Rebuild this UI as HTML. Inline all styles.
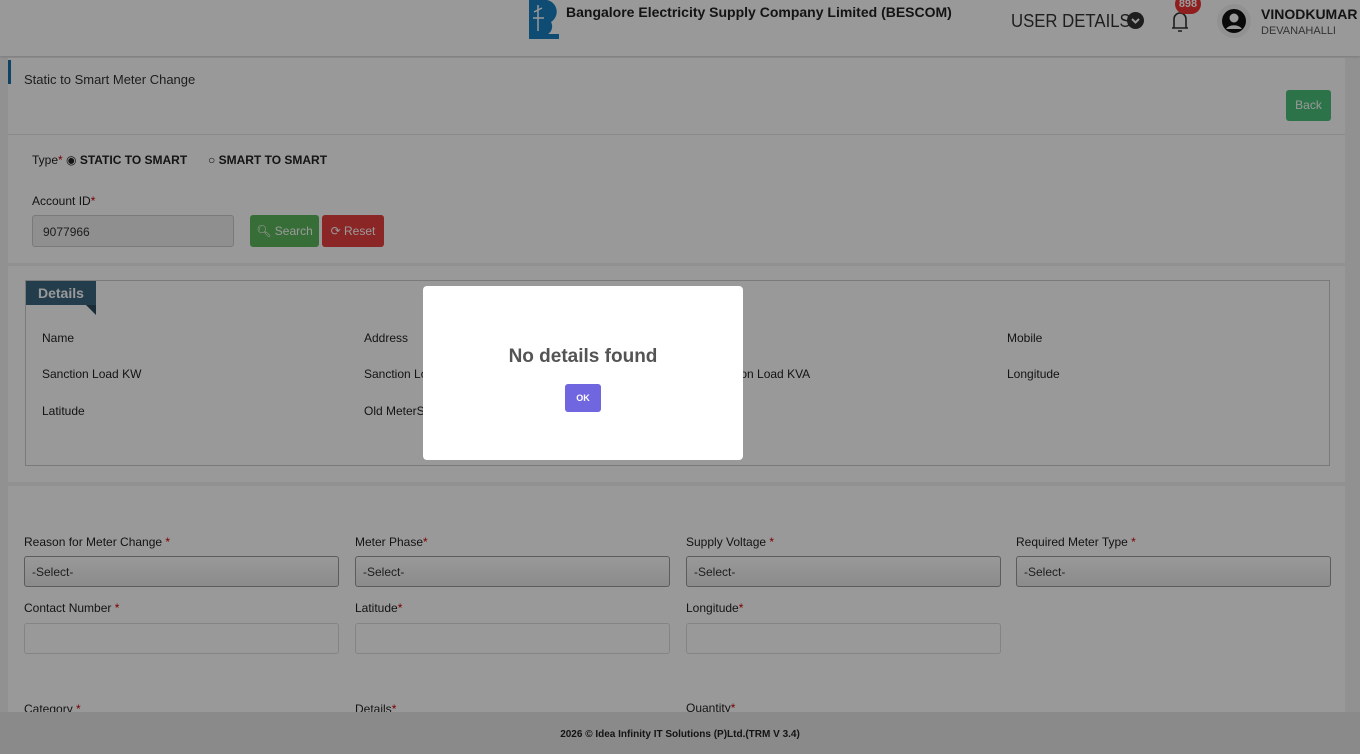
<!DOCTYPE html>
<html><head><meta charset="utf-8"><style>
*{box-sizing:border-box;margin:0;padding:0}
html,body{width:1360px;height:754px;overflow:hidden}
body{background:#f2f2f2;font-family:"Liberation Sans",sans-serif;font-size:12px;color:#222;position:relative}
.a{position:absolute}
.card{position:absolute;background:#fff;left:8px;width:1337px}
.lbl{position:absolute;font-size:12px;color:#222}
.st{color:#c00}
.sel{position:absolute;height:31px;width:315px;border:1px solid #999;border-radius:3px;background:linear-gradient(#fff,#e8e8e8);padding:8px 7px;font-size:12px;color:#333}
.inp{position:absolute;height:31px;width:315px;border:1px solid #ddd;border-radius:3px;background:#fff}
</style></head><body>
<div class="a" style="left:0;top:0;width:1360px;height:56px;background:#fff;box-shadow:0 1px 2px #ccc"></div>
<div class="a" style="left:528px;top:0;width:34px;height:40px">
<svg width="34" height="40"><path d="M1 0h18a12 12 0 0 1 4 22a9 9 0 0 1 -3 12h-19z" fill="#1a7fc0"/><path d="M10 5v26M6 12l8 -4M5 18h11" stroke="#fff" stroke-width="1.5"/><rect x="1" y="34" width="30" height="5" fill="#1a7fc0"/></svg></div>
<div class="a" style="left:566px;top:4px;font-size:14px;font-weight:bold;color:#222">Bangalore Electricity Supply Company Limited (BESCOM)</div>
<div class="a" style="left:1011px;top:11px;font-size:18px;color:#333;transform:scaleX(0.93);transform-origin:left">USER DETAILS</div>
<div class="a" style="left:1127px;top:12px;width:17px;height:17px;border-radius:50%;background:#333"></div>
<svg class="a" style="left:1127px;top:12px" width="17" height="17"><path d="M5 7l3.5 3.5L12 7" fill="none" stroke="#fff" stroke-width="2"/></svg>
<svg class="a" style="left:1168px;top:8px" width="24" height="26"><path d="M6 20V11a6 6 0 0 1 12 0v9h2M4 20h16M10 23h4" fill="none" stroke="#333" stroke-width="1.6"/></svg>
<div class="a" style="left:1175px;top:-6px;width:26px;height:20px;border-radius:10px;background:#e33;color:#fff;font-size:11px;font-weight:bold;text-align:center;line-height:20px">898</div>
<div class="a" style="left:1217px;top:4px;width:34px;height:34px;border-radius:50%;background:#f2f2f2"></div>
<svg class="a" style="left:1221px;top:8px" width="26" height="26"><circle cx="13" cy="13" r="12" fill="#111"/><circle cx="13" cy="10" r="4.5" fill="#fff"/><path d="M5 21a9 7 0 0 1 16 0" fill="#fff"/></svg>
<div class="a" style="left:1261px;top:6px;font-size:14px;font-weight:bold;color:#222">VINODKUMAR</div>
<div class="a" style="left:1261px;top:25px;font-size:11px;color:#555">DEVANAHALLI</div>

<div class="card" style="top:58px;height:205px"></div>
<div class="a" style="left:8px;top:60px;width:3px;height:24px;background:#1a6fa8"></div>
<div class="a" style="left:8px;top:134px;width:1337px;height:1px;background:#e6e6e6"></div>
<div class="a" style="left:24px;top:72px;font-size:13px;color:#333">Static to Smart Meter Change</div>
<div class="a" style="left:1286px;top:90px;width:45px;height:31px;background:#4cc07a;border-radius:3px;color:#fff;text-align:center;line-height:31px">Back</div>
<div class="lbl" style="left:32px;top:153px">Type<span class="st">*</span> ◉ <b>STATIC TO SMART</b></div>
<div class="lbl" style="left:208px;top:153px">○ <b>SMART TO SMART</b></div>
<div class="lbl" style="left:32px;top:194px">Account ID<span class="st">*</span></div>
<div class="a" style="left:32px;top:215px;width:202px;height:32px;border:1px solid #ccc;border-radius:3px;background:#eee;padding:9px 10px;color:#333">9077966</div>
<div class="a" style="left:250px;top:215px;width:69px;height:32px;background:#5cb85c;border-radius:3px;color:#fff;line-height:32px;text-align:center">🔍︎ Search</div>
<div class="a" style="left:322px;top:215px;width:62px;height:32px;background:#e84040;border-radius:3px;color:#fff;line-height:32px;text-align:center">⟳ Reset</div>

<div class="card" style="top:266px;height:216px"></div>
<div class="a" style="left:25px;top:280px;width:1305px;height:186px;border:1px solid #ccc"></div>
<div class="a" style="left:26px;top:281px;width:70px;height:24px;background:#3d6680;color:#fff;font-size:14px;font-weight:bold;padding:4px 12px">Details</div>
<div class="a" style="left:86px;top:305px;width:0;height:0;border-top:10px solid #2a4a5e;border-left:10px solid transparent"></div>
<div class="lbl" style="left:42px;top:331px">Name</div><div class="lbl" style="left:364px;top:331px">Address</div><div class="lbl" style="left:1007px;top:331px">Mobile</div>
<div class="lbl" style="left:42px;top:367px">Sanction Load KW</div><div class="lbl" style="left:364px;top:367px">Sanction Load HP</div><div class="lbl" style="left:707px;top:367px">Sanction Load KVA</div><div class="lbl" style="left:1007px;top:367px">Longitude</div>
<div class="lbl" style="left:42px;top:404px">Latitude</div><div class="lbl" style="left:364px;top:404px">Old MeterSerial</div>

<div class="card" style="top:486px;height:240px"></div>
<div class="lbl" style="left:24px;top:535px">Reason for Meter Change <span class="st">*</span></div>
<div class="lbl" style="left:355px;top:535px">Meter Phase<span class="st">*</span></div>
<div class="lbl" style="left:686px;top:535px">Supply Voltage <span class="st">*</span></div>
<div class="lbl" style="left:1016px;top:535px">Required Meter Type <span class="st">*</span></div>
<div class="sel" style="left:24px;top:556px">-Select-</div><div class="sel" style="left:355px;top:556px">-Select-</div><div class="sel" style="left:686px;top:556px">-Select-</div><div class="sel" style="left:1016px;top:556px">-Select-</div>
<div class="lbl" style="left:24px;top:601px">Contact Number <span class="st">*</span></div>
<div class="lbl" style="left:355px;top:601px">Latitude<span class="st">*</span></div>
<div class="lbl" style="left:686px;top:601px">Longitude<span class="st">*</span></div>
<div class="inp" style="left:24px;top:623px"></div><div class="inp" style="left:355px;top:623px"></div><div class="inp" style="left:686px;top:623px"></div>
<div class="lbl" style="left:24px;top:702px">Category <span class="st">*</span></div>
<div class="lbl" style="left:355px;top:702px">Details<span class="st">*</span></div>
<div class="lbl" style="left:686px;top:701px">Quantity<span class="st">*</span></div>
<div class="a" style="left:0;top:712px;width:1360px;height:42px;background:#e6e6e6;text-align:center;line-height:46px;font-size:10px;font-weight:bold;color:#222">2026 © Idea Infinity IT Solutions (P)Ltd.(TRM V 3.4)</div>

<div class="a" style="left:0;top:0;width:1360px;height:754px;background:rgba(0,0,0,0.4)"></div>
<div class="a" style="left:423px;top:286px;width:320px;height:174px;background:#fff;border-radius:4px"></div>
<div class="a" style="left:423px;top:346px;width:320px;text-align:center;font-size:19px;font-weight:bold;color:#545454">No details found</div>
<div class="a" style="left:565px;top:384px;width:36px;height:28px;background:#7066e0;border-radius:3px;color:#fff;font-size:9px;font-weight:bold;text-align:center;line-height:28px">OK</div>
</body></html>
